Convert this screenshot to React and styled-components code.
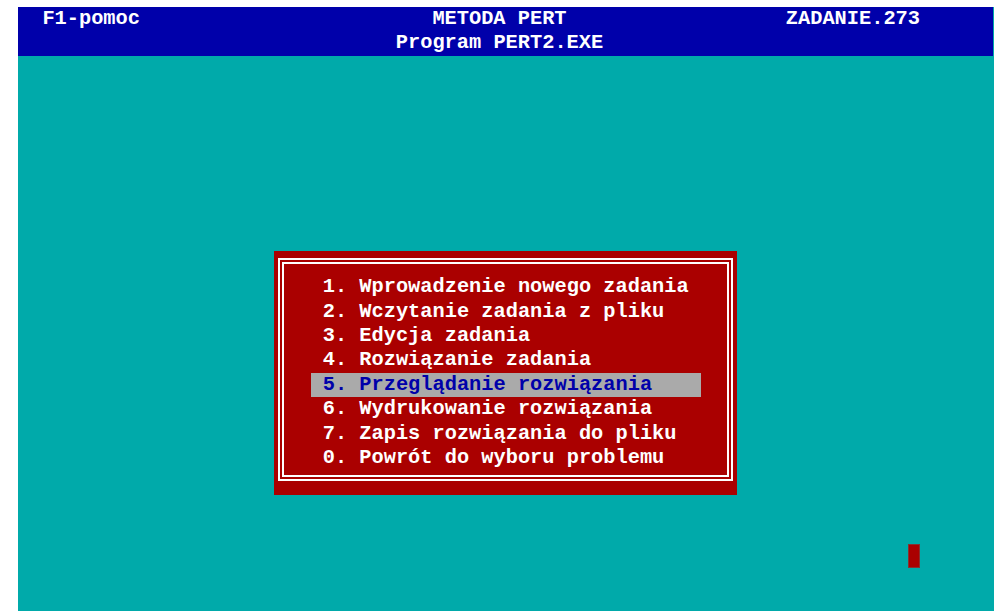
import React from 'react'
import styled, { createGlobalStyle } from 'styled-components'

// text-mode cell: 80 x 25 grid
const CELL_W = 12.2
const CELL_H = 24.4

const GlobalStyle = createGlobalStyle`
  html, body {
    margin: 0;
    background: #ffffff;
  }
  body {
    padding: 7px 0 0 18px;
    overflow: hidden;
  }
`

const Screen = styled.div`
  width: ${80 * CELL_W}px;
  height: 604px;
  overflow: hidden;
  background: #00aaaa;
  display: grid;
  grid-template-columns: repeat(80, ${CELL_W}px);
  grid-template-rows: repeat(25, ${CELL_H}px);
  font-family: 'Liberation Mono', 'DejaVu Sans Mono', monospace;
  font-size: 20.33px;
  font-weight: bold;
  line-height: ${CELL_H}px;
  color: #ffffff;
`

const TopBar = styled.header`
  grid-column: 1 / -1;
  grid-row: 1 / 3;
  background: #0000aa;
  display: grid;
  grid-template-columns: repeat(80, ${CELL_W}px);
  grid-template-rows: repeat(2, ${CELL_H}px);
`

const Label = styled.span`
  grid-column: ${({ $col }) => $col + 1} / span ${({ $len }) => $len};
  grid-row: ${({ $row }) => $row + 1};
  white-space: pre;
`

const MenuBox = styled.div`
  grid-column: 22 / span 38;
  grid-row: 11 / span 10;
  background: #aa0000;
  padding: 7px 4px 14px 4px;
  display: flex;
  flex-direction: column;
`

const Frame = styled.div`
  flex: 1;
  border: 2px solid #ffffff;
  padding: 2px;
  display: flex;
`

const InnerFrame = styled.div`
  flex: 1;
  border: 2px solid #ffffff;
  padding: 11.4px 0 0 26.6px;
`

const MenuList = styled.ul`
  list-style: none;
  margin: 0;
  padding: 0;
`

const MenuItem = styled.li`
  width: ${32 * CELL_W}px;
  height: ${CELL_H}px;
  padding-left: ${CELL_W}px;
  box-sizing: border-box;
  white-space: pre;
  background: ${({ $active }) => ($active ? '#aaaaaa' : 'transparent')};
  color: ${({ $active }) => ($active ? '#0000aa' : '#ffffff')};
`

const Cursor = styled.div`
  grid-column: 74;
  grid-row: 23;
  background: #aa0000;
  box-shadow: inset 0 0 0 1px rgba(120, 70, 70, 0.7);
`

const items = [
  '1. Wprowadzenie nowego zadania',
  '2. Wczytanie zadania z pliku',
  '3. Edycja zadania',
  '4. Rozwiązanie zadania',
  '5. Przeglądanie rozwiązania',
  '6. Wydrukowanie rozwiązania',
  '7. Zapis rozwiązania do pliku',
  '0. Powrót do wyboru problemu',
]

const ACTIVE = 4

export default function App() {
  return (
    <>
      <GlobalStyle />
      <Screen>
        <TopBar>
          <Label $col={2} $row={0} $len={8}>F1-pomoc</Label>
          <Label $col={34} $row={0} $len={11}>METODA PERT</Label>
          <Label $col={63} $row={0} $len={11}>ZADANIE.273</Label>
          <Label $col={31} $row={1} $len={17}>Program PERT2.EXE</Label>
        </TopBar>
        <MenuBox>
          <Frame>
            <InnerFrame>
              <MenuList>
                {items.map((text, i) => (
                  <MenuItem key={text} $active={i === ACTIVE}>
                    {text}
                  </MenuItem>
                ))}
              </MenuList>
            </InnerFrame>
          </Frame>
        </MenuBox>
        <Cursor />
      </Screen>
    </>
  )
}
